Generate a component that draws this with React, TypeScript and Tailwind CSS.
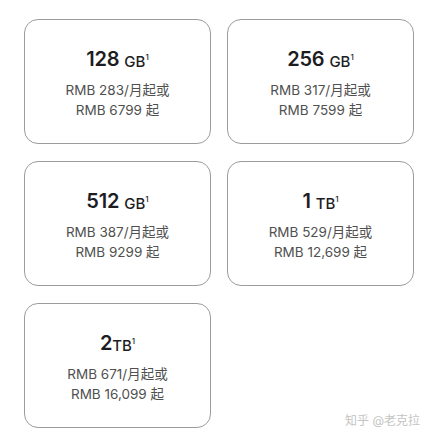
import React from "react";

type Item = { size: string; unit: string; gap: boolean; month: string; total: string };

const items: Item[] = [
  { size: "128", unit: "GB", gap: true, month: "283", total: "6799" },
  { size: "256", unit: "GB", gap: true, month: "317", total: "7599" },
  { size: "512", unit: "GB", gap: true, month: "387", total: "9299" },
  { size: "1", unit: "TB", gap: true, month: "529", total: "12,699" },
  { size: "2", unit: "TB", gap: false, month: "671", total: "16,099" },
];

const font = { fontFamily: '"Inter", "Noto Sans CJK SC", sans-serif' };

function Card({ it }: { it: Item }) {
  return (
    <div className="w-[187px] h-[125px] rounded-[14px] border border-[#9c9c9c] bg-white flex flex-col items-center justify-center pt-[4px]">
      <div className="flex items-start leading-[24px] text-[#1d1d1f]">
        <span className="text-[20px] font-semibold tracking-[-0.2px]">{it.size}</span>
        {it.gap && <span className="w-[5px]" />}
        <span className="text-[15px] font-medium mt-[5px] leading-[20px]">{it.unit}</span>
        <span className="text-[8px] font-medium leading-[10px] mt-[5px]">1</span>
      </div>
      <div className="mt-[8px] text-[13.5px] leading-[20px] text-[#505050] text-center">
        <div>RMB {it.month}/月起或</div>
        <div>RMB {it.total} 起</div>
      </div>
    </div>
  );
}

export default function App() {
  return (
    <div className="relative w-[430px] h-[440px] bg-white" style={font}>
      <div className="grid grid-cols-[187px_187px] gap-x-[16px] gap-y-[17px] pl-[24px] pt-[19px]">
        {items.map((it) => (
          <Card key={it.size + it.unit} it={it} />
        ))}
      </div>
      <div className="absolute right-[10px] top-[413px] text-[12px] leading-[16px] text-[#c4c4c4]">
        知乎 @老克拉
      </div>
    </div>
  );
}
